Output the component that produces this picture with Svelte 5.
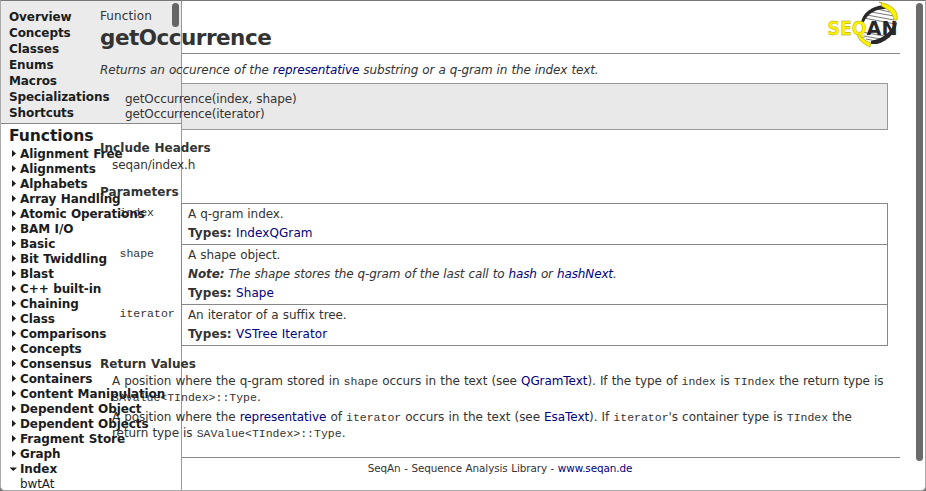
<script>
  const pages = ['Overview', 'Concepts', 'Classes', 'Enums', 'Macros', 'Specializations', 'Shortcuts'];
  const groups = [
    'Alignment Free', 'Alignments', 'Alphabets', 'Array Handling', 'Atomic Operations',
    'BAM I/O', 'Basic', 'Bit Twiddling', 'Blast', 'C++ built-in', 'Chaining', 'Class',
    'Comparisons', 'Concepts', 'Consensus', 'Containers', 'Content Manipulation',
    'Dependent Object', 'Dependent Objects', 'Fragment Store', 'Graph', 'Index'
  ];
  const params = [
    { name: 'index', text: 'A q-gram index.', type: 'IndexQGram' },
    { name: 'shape', text: 'A shape object.', note: true, type: 'Shape' },
    { name: 'iterator', text: 'An iterator of a suffix tree.', type: 'VSTree Iterator' }
  ];
</script>

<div class="window">
  <aside>
    <nav class="pages">
      <div class="over">
        {#each pages as page}<a href="#top">{page}</a>{/each}
      </div>
      <i class="thumb"></i>
    </nav>
    <nav class="groups over">
      <h2>Functions</h2>
      {#each groups as group}
        <a href="#top">
          <svg width="11" height="15" viewBox="0 0 11 15">
            {#if group === 'Index'}
              <path d="M0.5 5.5H8L4.3 9Z" />
            {:else}
              <path d="M3 3L7 6.5L3 10Z" />
            {/if}
          </svg><span>{group}</span>
        </a>
      {/each}
      <a class="leaf" href="#top">bwtAt</a>
    </nav>
  </aside>

  <main>
    <header>
      <div>
        <div class="kind">Function</div>
        <h1>getOccurrence</h1>
      </div>
      <svg class="logo" width="72" height="48" viewBox="0 0 72 48">
        <path d="M33 34C31 21 37 9 55 5L66 13C70 24 62 38 44 42Z" fill="#fff" />
        <path d="M43 11L66 15M39 14L66 19M36 17L67 23M36 35L58 39M38 38L53 41M49 8L62 11M34 31L62 36" stroke="#777" stroke-width="1" />
        <path d="M33 22C34 13 43 5 56 4L60 6L57 8C48 8 40 12 36 21Z" fill="#292727" />
        <path d="M69 21C68 32 60 40 49 43L43 43L43 40C53 38 61 33 65 25Z" fill="#292727" />
        <path d="M51 1C61 3 71 8 69 19L66 19C65 12 60 8 53 5L54 3Z" fill="#fff200" stroke="#9a9300" stroke-width=".6" />
        <path d="M31 31C32 36 37 40 43 42L42 46C35 43 30 39 29 32Z" fill="#fff200" stroke="#9a9300" stroke-width=".6" />
        <text x="-0.5" y="33.5" textLength="39" lengthAdjust="spacingAndGlyphs" fill="#fff200" stroke="#a8a100" stroke-width=".4">SEQ</text>
        <text x="38.5" y="33.5" textLength="31" lengthAdjust="spacingAndGlyphs" fill="#292727">AN</text>
      </svg>
    </header>

    <p class="summary">Returns an occurence of the <a href="#top">representative</a> substring or a q-gram in the index text.</p>
    <div class="signature"><div>getOccurrence(index, shape)<br />getOccurrence(iterator)</div></div>

    <h3>Include Headers</h3>
    <p class="include">seqan/index.h</p>

    <h3 class="ph">Parameters</h3>
    <div class="params">
      {#each params as p}
        <section>
          <code>{p.name}</code>
          <div class="cell">
            <p>{p.text}</p>
            {#if p.note}
              <p class="note"><b>Note:</b> The shape stores the q-gram of the last call to <a href="#top">hash</a> or <a href="#top">hashNext</a>.</p>
            {/if}
            <p class="types"><b>Types:</b> <a href="#top">{p.type}</a></p>
          </div>
        </section>
      {/each}
    </div>

    <h3 class="rh">Return Values</h3>
    <div class="returns">
      <p>A position where the q-gram stored in <code>shape</code> occurs in the text (see <a href="#top">QGramText</a>). If the type of <code>index</code> is <code>TIndex</code> the return type is<br /><code>SAValue&lt;TIndex&gt;::Type</code>.</p>
      <p>A position where the <a href="#top">representative</a> of <code>iterator</code> occurs in the text (see <a href="#top">EsaText</a>). If <code>iterator</code>'s container type is <code>TIndex</code> the<br />return type is <code>SAValue&lt;TIndex&gt;::Type</code>.</p>
    </div>
    <footer>SeqAn - Sequence Analysis Library - <a href="#top">www.seqan.de</a></footer>
  </main>
  <i class="scroll"></i>
</div>

<style>
  :global(body) { background: #777; }
  * { box-sizing: border-box; }
  .window {
    display: grid;
    grid-template-columns: 181px 1fr;
    position: relative;
    width: 926px;
    height: 491px;
    overflow: hidden;
    border: 1px solid #aaa;
    border-top-color: #777;
    border-radius: 0 0 5px 5px;
    background: #fff;
    font: 12px/15px Verdana, 'DejaVu Sans', sans-serif;
    letter-spacing: -0.09px;
    word-spacing: 0.4px;
    color: #333;
  }
  a { color: #000080; text-decoration: none; }
  p, h1, h2, h3 { margin: 0; }
  aside { grid-area: 1 / 1; border-right: 1px solid #999; height: 489px; }
  aside a { display: flex; color: #1c1c1c; font-weight: bold; white-space: nowrap; }
  .over { position: relative; z-index: 2; }
  .pages { position: relative; height: 123px; padding: 8px 0 0 8px; background: #ebebeb; border-bottom: 1px solid #888; }
  .pages a { line-height: 16px; }
  .thumb { position: absolute; right: 2px; top: 2px; width: 7px; height: 24px; border-radius: 4px; background: #666; }
  .groups { padding: 1px 0 0 8px; color: #1c1c1c; }
  h2 { font-size: 15.6px; line-height: 22px; }
  .groups svg { flex: none; fill: #1c1c1c; }
  .groups a.leaf { padding-left: 11px; font-weight: normal; }

  main { grid-area: 1 / 1 / 2 / 3; position: relative; z-index: 1; padding-left: 99px; width: 899px; }
  header { display: flex; justify-content: space-between; height: 53px; padding-top: 8px; position: relative; }
  header::after { content: ''; position: absolute; left: 82px; right: 0; bottom: 0; border-bottom: 1px solid #888; }
  .kind { letter-spacing: 0.1px; }
  h1 { font-size: 21.5px; line-height: 28px; letter-spacing: -0.5px; }
  .logo { margin-top: -8px; font: bold 20px 'DejaVu Sans', sans-serif; letter-spacing: 0; word-spacing: 0; }
  .summary { margin-top: 9px; font-style: italic; letter-spacing: -0.12px; }
  .signature { margin: 5px 12px 0 81px; height: 47px; border: 1px solid #999; background: #e9e9e9; padding-top: 8px; }
  .signature div { margin-left: -57px; letter-spacing: -0.12px; }
  h3 { font-size: 12px; line-height: 15px; margin-top: 11px; letter-spacing: 0.04px; }
  .include { margin: 2px 0 0 12px; }
  .ph { margin-top: 12px; }
  .params { margin: 3px 12px 0 0; }
  section { display: flex; }
  section code { width: 81px; padding: 2px 0 0 19.5px; }
  .cell { flex: 1; border: 1px solid #888; border-bottom: 0; padding: 1px 6px; }
  .cell p { line-height: 19px; }
  section:last-child .cell { border-bottom: 1px solid #888; }
  .note { font-style: italic; letter-spacing: -0.13px; }
  .types { letter-spacing: 0.08px; }
  code { font: 11.5px/15px 'Courier New', 'Liberation Mono', monospace; letter-spacing: 0; word-spacing: 0; }
  .rh { margin-top: 11px; }
  .returns { padding-left: 12px; white-space: nowrap; letter-spacing: -0.07px; }
  .returns p { line-height: 16px; margin-top: 1px; }
  .returns p + p { margin-top: 4px; }
  footer { margin: 16px 0 0 82px; padding: 3px 82px 0 0; border-top: 1px solid #888; text-align: center; font-size: 10.4px; }
  .scroll { position: absolute; right: 2px; top: 2px; width: 7px; height: 458px; border-radius: 4px; background: #6b6b6b; }
</style>
